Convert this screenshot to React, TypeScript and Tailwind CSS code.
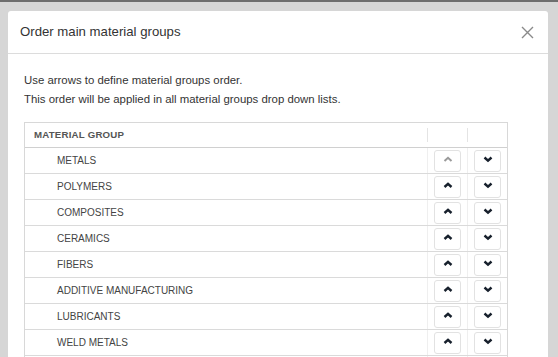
import React from 'react';

const GROUPS = [
  'METALS',
  'POLYMERS',
  'COMPOSITES',
  'CERAMICS',
  'FIBERS',
  'ADDITIVE MANUFACTURING',
  'LUBRICANTS',
  'WELD METALS',
  'OTHERS',
];

function Chevron({ dir, disabled }: { dir: 'up' | 'down'; disabled?: boolean }) {
  return (
    <svg width="10" height="7" viewBox="0 0 10 7" className={disabled ? 'text-[#9a9a9a]' : 'text-[#17202c]'}>
      <polyline
        points={dir === 'up' ? '1.5,5 5,1.8 8.5,5' : '1.5,1.5 5,4.7 8.5,1.5'}
        fill="none"
        stroke="currentColor"
        strokeWidth={disabled ? 2 : 2.4}
      />
    </svg>
  );
}

function ArrowButton({ dir, disabled }: { dir: 'up' | 'down'; disabled?: boolean }) {
  return (
    <button className="w-[27px] h-[22px] pb-[2px] flex items-center justify-center rounded-[3px] border border-[#e2e2e2] bg-white">
      <Chevron dir={dir} disabled={disabled} />
    </button>
  );
}

export default function App() {
  return (
    <div
      className="w-[558px] h-[357px] overflow-hidden bg-[#d6d6d6] border-t-2 border-[#6e6e6e]"
      style={{ fontFamily: '"Liberation Sans", Arial, sans-serif' }}
    >
      <div className="ml-[8px] mt-[9px] w-[540px] bg-white rounded-t-[3px]">
        {/* Header */}
        <div className="h-[43px] flex items-center justify-between pl-[12px] pr-[14px] border-b border-[#dcdcdc]">
          <h2 className="text-[13.2px] text-[#333]">Order main material groups</h2>
          <svg width="13" height="13" viewBox="0 0 13 13" className="text-[#8a8a8a]">
            <path d="M1 1L12 12M12 1L1 12" stroke="currentColor" strokeWidth="1.4" fill="none" />
          </svg>
        </div>

        {/* Body */}
        <div className="pl-[16px] pt-[17px]">
          <p className="text-[11.4px] leading-[19px] text-[#333]">Use arrows to define material groups order.</p>
          <p className="text-[11.4px] leading-[19px] text-[#333]">This order will be applied in all material groups drop down lists.</p>

          <div className="mt-[13px] w-[484px] border border-[#d8d8d8]">
            <div className="h-[25px] flex items-center border-b border-[#d0d0d0]">
              <div className="flex-1 pl-[9px] text-[9.7px] font-bold text-[#555] tracking-[0.2px]">MATERIAL GROUP</div>
              <div className="w-[40px] h-[14px] border-l border-[#e4e4e4]" />
              <div className="w-[40px] h-[14px] border-l border-[#e4e4e4]" />
            </div>
            {GROUPS.map((g, i) => (
              <div key={g} className="h-[26px] flex border-b border-[#dadada]">
                <div className="flex-1 pl-[32px] flex items-center text-[10px] text-[#444]">{g}</div>
                <div className="w-[40px] flex items-center justify-center border-l border-[#efefef]">
                  <ArrowButton dir="up" disabled={i === 0} />
                </div>
                <div className="w-[40px] flex items-center justify-center border-l border-[#efefef]">
                  <ArrowButton dir="down" />
                </div>
              </div>
            ))}
          </div>
        </div>
      </div>
    </div>
  );
}
